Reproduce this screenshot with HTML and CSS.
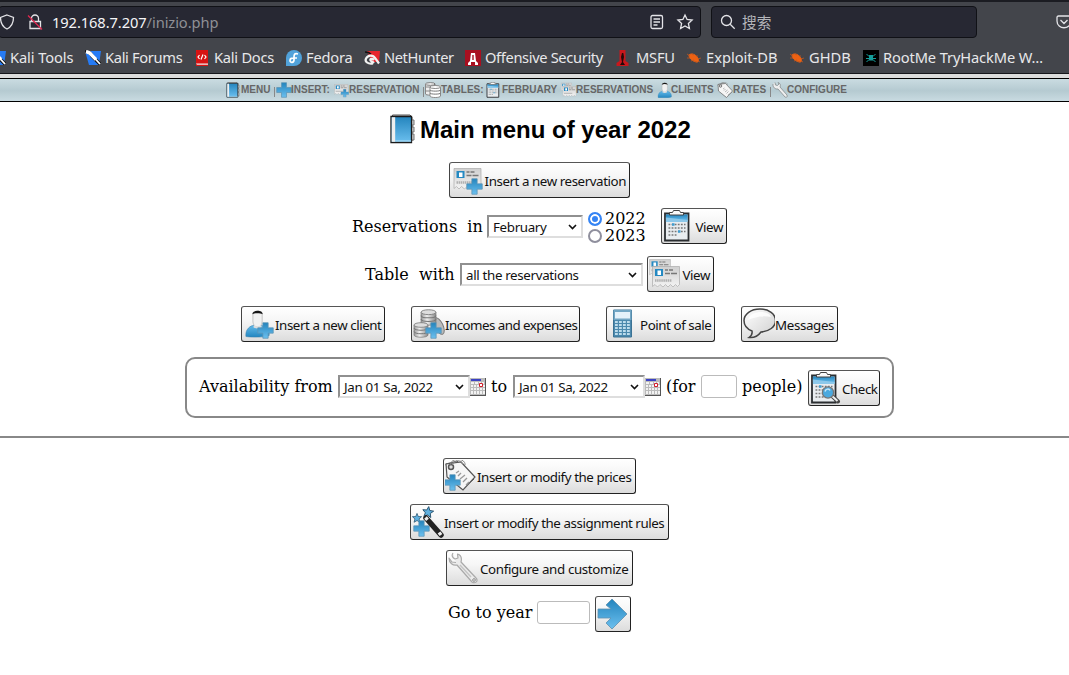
FILE: index.html
```html
<!DOCTYPE html>
<html lang="en">
<head>
<meta charset="utf-8">
<title>Main menu</title>
<link rel="stylesheet" href="styles.css">
</head>
<body>
<svg class="defs" aria-hidden="true">
  <defs>
    <linearGradient id="blue" x1="0" y1="0" x2="0" y2="1"><stop offset="0" stop-color="#2384bd"/><stop offset="1" stop-color="#6cc0ef"/></linearGradient>
    <linearGradient id="bluerev" x1="0" y1="0" x2="0" y2="1"><stop offset="0" stop-color="#65bae9"/><stop offset="1" stop-color="#2286c0"/></linearGradient>
    <linearGradient id="grey" x1="0" y1="0" x2="1" y2="1"><stop offset="0" stop-color="#fff"/><stop offset="1" stop-color="#cfcfcf"/></linearGradient>
    <linearGradient id="paper" x1="0" y1="0" x2="0" y2="1"><stop offset="0" stop-color="#cfcfcf"/><stop offset="1" stop-color="#f4f4f4"/></linearGradient>
    <linearGradient id="metal"><stop offset="0" stop-color="#999"/><stop offset=".4" stop-color="#eee"/><stop offset="1" stop-color="#888"/></linearGradient>
  </defs>
  <symbol id="plus" viewBox="0 0 16 16"><path d="M5.500.700h5v4.800h4.800v5h-4.800v4.800h-5v-4.800H.7v-5h4.800z" fill="url(#blue)" stroke="#5c93b3" stroke-width=".7"/></symbol>
  <symbol id="book" viewBox="0 0 25 30"><path d="M2.500 1h17.500l2 2v24H2z" fill="#c8c8c8" stroke="#555"/><path d="M22 6h2v5h-2m0 2h2v5h-2m0 2h2v6h-2" fill="#ccc" stroke="#777"/><path d="M1 2.500h20.500v26H1z" fill="url(#blue)" stroke="#1b1b1b" stroke-width="1.300"/><path d="M1.700 3.200h3.500v24.600H1.700z" fill="#eee"/><path d="M5.200 27h16" stroke="#b8e2f8"/></symbol>
  <symbol id="ticket" viewBox="0 0 28 22"><path d="M.5.500h27v18l-2 2-2-2-2.500 2.500-2.500-2.500-2.500 2.500-2.500-2.500-2.500 2.500L8 18.500 5.500 21 3 18.500l-2.500 2z" fill="url(#paper)" stroke="#aaa" stroke-width=".7"/><path d="M3 3h8v7H3z" fill="#2489c2"/><path d="M5.500 4.500h3.500v4.500H5.500z" fill="#fff"/><path d="M13 4h3m1 0h4M13 7.500h5m1 0h6" stroke="#777" stroke-width="1.300"/><path d="M3 14.500h17" stroke="#b0b0b0" stroke-width="2.500" stroke-dasharray="1.500 .6"/></symbol>
  <symbol id="newres" viewBox="0 0 32 32"><use href="#ticket" x="2" y="4" width="29" height="22"/><use href="#plus" x="15" y="14" width="17" height="17"/></symbol>
  <symbol id="tickets" viewBox="0 0 32 32"><use href="#ticket" x="0" y="1" width="22" height="17"/><use href="#ticket" x="3" y="8" width="28" height="22"/></symbol>
  <symbol id="clip" viewBox="0 0 32 32"><path d="M2 3.500h23.500v27H2z" fill="#e9edf0" stroke="#2b2e31" stroke-width="1.800"/><path d="M2.900 4.500h21.700V11L2.900 8.500z" fill="url(#blue)"/><path d="M2.900 7.500 24.600 10v2H2.900z" fill="#8cc8ea"/><path d="M6.500 5V2.500h3l1-2h6l1 2h3V5z" fill="#fafafa" stroke="#444"/><path d="M5.500 14.500h17M5.500 18h17M5.500 21.500h17M5.500 25h8" stroke="#777" stroke-width="1.300" stroke-dasharray="1.800 1.300"/><path d="M9 14.500h2.500M15 21.500h2.500" stroke="#3f9dd0" stroke-width="2.300"/></symbol>
  <symbol id="check" viewBox="0 0 32 32"><use href="#clip" width="32" height="32"/><path d="m21 23 7 6.500" stroke="#444" stroke-width="4" stroke-linecap="round"/><path d="m22 24 5.500 5" stroke="#eee" stroke-width="2"/><circle cx="18" cy="20.500" r="5.600" fill="#4aa9df" stroke="#777" stroke-width="1.300"/><path d="M15 19.500c1-3 4-3 5-1" fill="none" stroke="#c8e8fa" stroke-width="1.500"/></symbol>
  <symbol id="person" viewBox="0 0 28 30"><path d="M1 29C0 21 6 17 10 17h6c5 0 11 4 10 11-5 2-20 2-25 1z" fill="url(#bluerev)" stroke="#3c83ad" stroke-width=".6"/><path d="M8.500 4c0-3 10-3 10 0v8c0 4-2 7-5 7s-5-3-5-7z" fill="#f1f1f1" stroke="#aaa" stroke-width=".7"/><path d="M8 5c0-5 11-5 11 0-3-1.500-8-1.500-11 0z" fill="#151515"/><path d="M10 16c2 3 5 3 7 0l1 3c-3 2-6 2-9 0z" fill="#ddd"/></symbol>
  <symbol id="newclient" viewBox="0 0 32 32"><use href="#person" x="2" y="1" width="26" height="29"/><use href="#plus" x="14" y="14" width="17" height="17"/></symbol>
  <symbol id="stack" viewBox="0 0 16 16"><path d="M1 3v10c0 3 14 3 14 0V3" fill="url(#metal)" stroke="#777" stroke-width=".7"/><path d="M1 6c0 3 14 3 14 0M1 9.500c0 3 14 3 14 0" fill="none" stroke="#777"/><ellipse cx="8" cy="3" rx="7" ry="2.300" fill="#ddd" stroke="#777" stroke-width=".8"/></symbol>
  <symbol id="coins" viewBox="0 0 32 32"><ellipse cx="26" cy="18" rx="4" ry="9" transform="rotate(-25 26 18)" fill="#bbb" stroke="#777"/><use href="#stack" x="7" y="1" width="17" height="17"/><use href="#stack" x="0" y="14" width="16" height="16"/><use href="#plus" x="12" y="14" width="17" height="17"/></symbol>
  <symbol id="db" viewBox="0 0 16 16"><path d="M.5 2v10c0 1.500 9.500 1.500 9.500 0V2" fill="#eee" stroke="#888"/><ellipse cx="5.300" cy="2" rx="4.800" ry="1.300" fill="#fff" stroke="#777"/><path d="M.5 5H10M.5 9H10" stroke="#888"/><path d="M5 5v9c0 2 10.500 2 10.500 0V5" fill="#fff" stroke="#888"/><path d="M5 8c0 1.500 10.500 1.500 10.500 0M5 11c0 1.500 10.500 1.500 10.500 0" fill="none" stroke="#777"/><ellipse cx="10.200" cy="5" rx="5.200" ry="1.500" fill="#fff" stroke="#888"/></symbol>
  <symbol id="calc" viewBox="0 0 32 32"><path d="M5.500 2h18v27h-18z" fill="#4c89ad" stroke="#3b7294"/><path d="M5.500 2h18v10h-18z" fill="#72a6c4"/><path d="M7 4h15v6.500H7z" fill="#e4f1fa"/><path d="M7 14h15M7 17h15M7 20h15M7 23h15M7 26h15" stroke="#bddcec" stroke-width="1.900" stroke-dasharray="2.800 1.200"/></symbol>
  <symbol id="bubble" viewBox="0 0 32 32"><path d="M17 1c9 0 15.500 5 15.500 11.500S26 23.500 18 24C15 28 10 30 6 29.500c3-2 3.500-4 3-6.500C4 21 1 17 1 12.500 1 6 8 1 17 1z" fill="url(#grey)" stroke="#444" stroke-width="1.500"/><path d="M5 12c1-6 8-8 13-8s9 2 10 5c-8-2-16 0-23 3z" fill="#fff" opacity=".8"/></symbol>
  <symbol id="tag" viewBox="0 0 32 32"><path d="M2 5 13 2l17 18-12 10L5 18z" fill="#eee" stroke="#555"/><path d="M2 5 17 3l14 15-12 13L3 18z" fill="#f6f6f6" stroke="#555" stroke-width="1.200"/><circle cx="7" cy="8" r="2.500" fill="#ddd" stroke="#555" stroke-width="1.500"/><path d="M6 6C7-2 22-1 21 6M8 6c3-6 9-5 11-1" fill="none" stroke="#888"/><path d="m12 14 3-2m-1 5 3-3m-1 6 5-4m-2 7 4-4m-1 7 3-3" stroke="#999" stroke-width="1.300"/></symbol>
  <symbol id="newtag" viewBox="0 0 32 32"><use href="#tag" x="-1" y="-1" width="32" height="32"/><use href="#plus" x="-1" y="14" width="17" height="17"/></symbol>
  <symbol id="star" viewBox="0 0 12 12"><path d="m6 .5 1.500 3.700 4 .2-3 2.700 1 4L6 9l-3.500 2.100 1-4-3-2.700 4-.2z" fill="#5fb0df" stroke="#28526d" stroke-width=".9"/></symbol>
  <symbol id="wand" viewBox="0 0 32 32"><use href="#star" x="10" y="0" width="12" height="12" transform="rotate(8 16 6)"/><use href="#star" x="0" y="7" width="10" height="10"/><use href="#plus" x="1" y="14" width="17" height="17"/><path d="m14 12 15 17" stroke="#222" stroke-width="5.500" stroke-linecap="round"/><path d="m13.500 11.500 2 2.300M27 26.500l2 2.500" stroke="#eee" stroke-width="3.500"/></symbol>
  <symbol id="wrench" viewBox="0 0 32 32"><path d="M5 1c-2 3 0 5 2 6l3-1-.5-4C13 3 14 6 13 10l15 16c3 3-1 6-4 4L9 13C5 14 1 11 1 6l3 4 4 .5" fill="#ebebeb" stroke="#aaa" stroke-width="1.200" stroke-linejoin="round"/><path d="m12 13 11 12" stroke="#c5c5c5" stroke-width="1.500"/><circle cx="26" cy="28" r="1.300" fill="#fff" stroke="#888"/></symbol>
  <symbol id="wrench-small" viewBox="0 0 16 16"><path d="M3 .5 3.500 3l2 .5L7 2l-1-1.500C8 1 9 3 8 5l7 8c1 2-1 3-2 2L6 7C3 7.500.5 5 1 2" fill="#eee" stroke="#8d9496" stroke-width=".9" stroke-linejoin="round"/></symbol>
  <symbol id="arrow" viewBox="0 0 32 32"><path d="m15 1 15 15-15 15-6-6 5-5H1v-9h13L9 7z" fill="url(#blue)" stroke="#5e91b0" stroke-width=".8"/></symbol>
  <symbol id="cal" viewBox="0 0 16 18"><path d="M0 0h16v18H0z" fill="#555"/><path d="M0 0h15v17H0z" fill="#bbb"/><path d="M1 4h3v2H1zm4 0h3v2H5zm4 0h2v2H9zm3 0h2v2h-2zM1 7h2v2H1zm3 0h2v2H4zm3 0h2v2H7zm6 0h2v2h-2zM1 10h2v2H1zm3 0h2v2H4zm3 0h2v2H7zm3 0h2v2h-2zm3 0h2v2h-2zM1 13h2v3H1zm3 0h2v3H4zm3 0h2v3H7zm3 0h2v3h-2zm3 0h2v3h-2z" fill="#f2f2f2"/><path d="M1 1h10v2H1z" fill="#3b42c4"/><path d="M9.500 5.500h3v3h-3z" fill="#fff" stroke="#d3202d"/></symbol>
  <symbol id="chev" viewBox="0 0 9 6"><path d="m1 1 3.500 3.500L8 1" fill="none" stroke="#111" stroke-width="1.600"/></symbol>
  <symbol id="bug" viewBox="0 0 16 16"><path d="M3 5c2-2 6-1 8 2 2 2 2 5 0 5-3 0-8-3-8-7z" fill="#ee6112" stroke="#ee6112"/><path d="m1 4 3 2M1 8h3m1 3 3-1m-2-6 2 1m3 0v2m1 2 3-1m-3 3 2 1m-6-1 3 1" stroke="#c2571f" stroke-width=".8"/></symbol>
  <symbol id="kali" viewBox="0 0 16 16"><path d="M0 1h16l-2 14H4z" fill="#267bf5"/><path d="M0 1c4 1 6 2 7 5l8 8" fill="none" stroke="#111" stroke-width="3.600"/><path d="M1 1.500c4 1 5 2 6 4l4 4" fill="none" stroke="#fff" stroke-width="3.400"/><path d="m10 8.500 5 5.500" stroke="#fff" stroke-width="1.800"/></symbol>
</svg>

<header class="browser">
  <div class="toolbar">
    <div class="urlbar">
      <svg class="shield" viewBox="0 0 16 16"><path d="m8 1 6.500 2.500c0 6-2.500 9.500-6.500 11.500-4-2-6.500-5.500-6.500-11.500z"/></svg>
      <svg class="lock" viewBox="0 0 16 16"><path d="M4.500 7V4.500a3.500 3.500 0 0 1 7 0V7M3 7.500h10.500v7H3z"/><path class="slash" d="m1 1.500 14 14"/></svg>
      <span class="address"><b>192.168.7.207</b>/inizio.php</span>
      <svg class="reader" viewBox="0 0 16 16"><rect x="2" y="1.500" width="11.500" height="13" rx="1.500"/><path d="M4.500 5h6.500M4.500 8h6.500M4.500 11h4"/></svg>
      <svg class="fav" viewBox="0 0 16 16"><path d="m8 1 2.100 4.500 5 .6-3.700 3.400 1 5L8 12l-4.400 2.500 1-5L.9 6.100l5-.6z"/></svg>
    </div>
    <div class="search">
      <svg viewBox="0 0 16 16"><circle cx="6.500" cy="6.500" r="5"/><path d="m10.200 10.200 4.500 4.500"/></svg>
      <span>搜索</span>
    </div>
    <svg class="pocket" viewBox="0 0 16 16"><path d="M2.500 2h11q1.500 0 1.500 1.500V7c0 9-14 9-14 0V3.500Q1 2 2.500 2zM4.500 6 8 9.500 11.500 6"/></svg>
  </div>
  <nav class="bookmarks">
    <a class="bm b-tools"><svg><use href="#kali"/></svg><span>Kali Tools</span></a>
    <a class="bm b-forums"><svg><use href="#kali"/></svg><span>Kali Forums</span></a>
    <a class="bm b-docs"><svg viewBox="0 0 16 16"><path d="M2 0h12v16H2z" fill="#d81313"/><path d="M2 13.500h12v1.200H3z" fill="#eee"/><path d="M5.500 5 4 7l1.500 2M10.500 5 12 7l-1.500 2M9 4.500l-2 5" fill="none" stroke="#fff" stroke-width="1.200"/></svg><span>Kali Docs</span></a>
    <a class="bm b-fedora"><svg viewBox="0 0 16 16"><path d="M8 0a8 8 0 0 1 0 16H0V8a8 8 0 0 1 8-8z" fill="#51a2da"/><path d="M12 4c-3-1-4 0-4 3v3c0 3-4 3-4 .5S6 8 8 8h3" fill="none" stroke="#fff" stroke-width="1.700"/></svg><span>Fedora</span></a>
    <a class="bm b-net"><svg viewBox="0 0 16 16"><path d="M3 1h13l-1 11H8z" fill="#e8252e"/><path d="M1 2c3 0 5 1 6 2" stroke="#111" stroke-width="1.500"/><path d="M9 13.500c-5 1-8.500-2-7-5 2-3.500 7-4 9-.5l4 5.500M10 10C8 8 5.500 9 6.500 10.500S9 12 10 13" fill="none" stroke="#f2f2f2" stroke-width="2.200"/></svg><span>NetHunter</span></a>
    <a class="bm b-off"><svg viewBox="0 0 16 16"><path d="M0 0h16v16H0z" fill="#a90f20"/><path d="M6 3h4l1 8 2 2v2h-3v-3H6v3H3v-2l2-2z" fill="#fff"/><path d="M7.300 5h1.400v5H7.300z" fill="#a90f20"/></svg><span>Offensive Security</span></a>
    <a class="bm b-msfu"><svg viewBox="0 0 16 16"><path d="M3.500 0h6v11l3 2v3H.5v-3l3-2z" fill="#c9171c"/><path d="M6 3h1.300l.7 4-1 5 2 3H4l2-3-1-5z" fill="#250909"/></svg><span>MSFU</span></a>
    <a class="bm b-exp"><svg><use href="#bug"/></svg><span>Exploit-DB</span></a>
    <a class="bm b-ghdb"><svg><use href="#bug"/></svg><span>GHDB</span></a>
    <a class="bm b-root"><svg viewBox="0 0 16 16"><path d="M0 0h16v16H0z" fill="#000"/><path d="m3.500 4 2 2h5l2-2M3 8.500h10M3.500 12l2-2h5l2 2" fill="none" stroke="#159e9b"/><path d="M6 5h4v5H6z" fill="#159e9b"/></svg><span>RootMe TryHackMe W…</span></a>
  </nav>
</header>

<nav class="menu">
  <a class="m1"><svg><use href="#book"/></svg>MENU</a><i></i>
  <a class="m2"><svg><use href="#plus"/></svg>INSERT:</a>
  <a class="m3"><svg><use href="#newres"/></svg>RESERVATION</a><i></i>
  <a class="m4"><svg><use href="#db"/></svg>TABLES:</a>
  <a class="m5"><svg><use href="#clip"/></svg>FEBRUARY</a>
  <a class="m6"><svg><use href="#tickets"/></svg>RESERVATIONS</a>
  <a class="m7"><svg><use href="#person"/></svg>CLIENTS</a>
  <a class="m8"><svg><use href="#tag"/></svg>RATES</a><i></i>
  <a class="m9"><svg><use href="#wrench-small"/></svg>CONFIGURE</a>
</nav>

<main>
  <h1><svg><use href="#book"/></svg><span>Main menu of year 2022</span></h1>
  <div class="row r-new"><button class="btn w-newres"><svg><use href="#newres"/></svg><span>Insert a new reservation</span></button></div>
  <div class="row r-month">
    <span class="txt t-res">Reservations&nbsp; in</span>
    <span class="sel s-month"><span>February</span><svg><use href="#chev"/></svg></span>
    <span class="years"><label><input type="radio" name="y" checked>2022</label><label><input type="radio" name="y">2023</label></span>
    <button class="btn w-view1"><svg><use href="#clip"/></svg><span>View</span></button>
  </div>
  <div class="row r-table">
    <span class="txt t-table">Table&nbsp; with</span>
    <span class="sel s-all"><span>all the reservations</span><svg><use href="#chev"/></svg></span>
    <button class="btn w-view2"><svg><use href="#tickets"/></svg><span>View</span></button>
  </div>
  <div class="row r-actions">
    <button class="btn w-client"><svg><use href="#newclient"/></svg><span>Insert a new client</span></button>
    <button class="btn w-income"><svg><use href="#coins"/></svg><span>Incomes and expenses</span></button>
    <button class="btn w-pos"><svg><use href="#calc"/></svg><span>Point of sale</span></button>
    <button class="btn w-msg"><svg><use href="#bubble"/></svg><span>Messages</span></button>
  </div>
  <div class="avail">
    <span class="txt t-from">Availability from</span>
    <span class="sel s-date"><span>Jan 01 Sa, 2022</span><svg><use href="#chev"/></svg></span><svg class="cal"><use href="#cal"/></svg>
    <span class="txt t-to">to</span>
    <span class="sel s-date"><span>Jan 01 Sa, 2022</span><svg><use href="#chev"/></svg></span><svg class="cal"><use href="#cal"/></svg>
    <span class="txt t-for">(for</span><input class="field f-people" type="text"><span class="txt t-people">people)</span>
    <button class="btn w-check"><svg><use href="#check"/></svg><span>Check</span></button>
  </div>
  <hr>
  <div class="row r-prices"><button class="btn w-prices"><svg><use href="#newtag"/></svg><span>Insert or modify the prices</span></button></div>
  <div class="row r-rules"><button class="btn w-rules"><svg><use href="#wand"/></svg><span>Insert or modify the assignment rules</span></button></div>
  <div class="row r-conf"><button class="btn w-conf"><svg><use href="#wrench"/></svg><span>Configure and customize</span></button></div>
  <div class="row r-year"><span class="txt t-year">Go to year</span><input class="field f-year" type="text"><button class="btn w-go"><svg><use href="#arrow"/></svg></button></div>
</main>
</body>
</html>
```

FILE: styles.css
```css
* { box-sizing: border-box; }
body { margin: 0; height: 675px; overflow: hidden; background: #fff; font-family: "DejaVu Serif", serif; font-size: 16px; color: #000; }
svg { display: block; flex: none; overflow: visible; }
.defs { position: absolute; width: 0; height: 0; }

/* browser chrome */
.browser { height: 74px; background: #43454b; border-top: 2px solid #1b1c22; border-bottom: 1px solid #16171b; color: #e8e8ea; font-family: "Noto Sans", "Noto Sans CJK SC", sans-serif; font-size: 14.67px; }
.toolbar { display: flex; height: 40px; padding-top: 4px; }
.urlbar, .search { display: flex; flex: none; align-items: center; height: 32px; background: #272833; border: 1px solid #101116; border-radius: 4px; }
.urlbar { width: 703px; margin-left: -2px; }
.browser .toolbar svg { width: 16px; height: 16px; fill: none; stroke: #e4e4e8; stroke-width: 1.3; }
.toolbar .lock { margin-left: 12px; }
.toolbar .lock .slash { stroke: #e22850; }
.address { width: 597px; padding-bottom: 1px; margin-left: 9px; color: #8f9096; white-space: nowrap; letter-spacing: -.08px; }
.address b { font-weight: 400; color: #f5f5f7; }
.toolbar .fav { margin-left: 12px; }
.search { width: 266px; margin-left: 10px; padding-left: 8px; gap: 6px; color: #b4b5ba; }
.search span { padding-bottom: 1px; }
.toolbar .pocket { margin: 8px 0 0 79px; }
.bookmarks { display: flex; height: 31px; margin-left: -10px; align-items: center; }
.bm { display: flex; flex: none; align-items: center; gap: 4px; white-space: nowrap; }
.bm svg { width: 16px; height: 16px; }
.bm span { padding-bottom: 2px; }
.b-tools { width: 95px; letter-spacing: -.1px; }
.b-forums { width: 109px; letter-spacing: -.33px; }
.b-docs { width: 92px; letter-spacing: -.25px; }
.b-fedora { width: 78px; letter-spacing: -.2px; }
.b-net { width: 101px; letter-spacing: -.4px; }
.b-off { width: 151px; letter-spacing: -.35px; }
.b-msfu { width: 70px; letter-spacing: -.2px; }
.b-exp { width: 103px; }
.b-ghdb { width: 74px; }
.b-root { letter-spacing: -.12px; }

/* page menu */
.menu { display: flex; height: 28px; padding-left: 225px; background: linear-gradient(#ccdde3, #b5cad1 55%, #c9dbe1); border-top: 4px solid #dcdcdc; border-bottom: 1px solid #000; box-shadow: inset 0 1px #000; font: bold 10px/23px "Liberation Sans", Arial, sans-serif; color: #666; }
.menu a { display: flex; flex: none; align-items: center; white-space: nowrap; }
.menu svg { width: 16px; height: 16px; }
.menu i { width: 1px; height: 10px; margin: 9px 1px 0; background: #888; }
.m1 { width: 48px; } .m2 { width: 57px; } .m3 { width: 89px; } .m4 { width: 61px; } .m5 { width: 75px; }
.m6 { width: 96px; } .m7 { width: 60px; } .m8 { width: 52px; }
.menu .m2 svg, .menu .m6 svg, .menu .m9 svg { margin-right: -1px; }
.menu .m7 svg { margin-right: -2px; }

/* content */
h1 { display: flex; height: 30px; margin: 12px 0 0 390px; gap: 5px; font: bold 24px/32px "Liberation Sans", Arial, sans-serif; }
h1 svg { width: 25px; height: 30px; }
.row { display: flex; height: 36px; }
.row, .avail { white-space: nowrap; }
.txt { flex: none; }
.row .txt { line-height: 38px; }
.btn { display: flex; flex: none; align-items: center; justify-content: space-between; height: 36px; padding: 0 3px 0 1px; border: 1px solid; border-color: #555 #222 #222 #444; border-radius: 3px; background: linear-gradient(#fff, #f6f6f6 40%, #dcdcdc); font: 13.33px "Noto Sans", sans-serif; letter-spacing: -.43px; color: #111; white-space: nowrap; }
.btn svg { width: 32px; height: 32px; }
.btn span { padding-top: 2px; }
.sel { display: flex; flex: none; align-items: center; justify-content: space-between; height: 23px; padding: 0 4px; border: 2px solid; border-color: #909090 #dedede #dedede #909090; background: #fff; font: 13.33px "Noto Sans", sans-serif; letter-spacing: -.33px; color: #111; }
.sel svg { width: 9px; height: 6px; }
.field { flex: none; height: 23px; padding: 0 4px; border: 1px solid #bbb; border-radius: 3px; background: #fff; }
.r-new { margin: 18px 0 0 449px; } .w-newres { width: 181px; }
.r-month { margin: 10px 0 0 352px; }
.t-res { width: 135px; } .s-month { width: 96px; } .r-month .sel, .r-table .sel { margin-top: 7px; }
.years { display: flex; flex-direction: column; width: 78px; padding: 2px 0 0 5px; line-height: 17px; }
.years label { display: flex; align-items: center; gap: 3px; height: 17px; }
.years input { appearance: none; flex: none; width: 14px; height: 14px; margin: 0; border: 2px solid #8f8f9d; border-radius: 50%; background: #fff; }
.years input:checked { border-color: #3584f4; background: #3584f4; box-shadow: inset 0 0 0 2px #fff; }
.w-view1 { width: 66px; }
.r-table { margin: 12px 0 0 365px; }
.t-table { width: 95px; } .s-all { width: 183px; margin-right: 4px; } .w-view2 { width: 67px; }
.r-actions { margin: 14px 0 0 241px; }
.w-client { width: 144px; margin-right: 26px; } .w-income { width: 169px; margin-right: 26px; letter-spacing: -.53px; }
.w-pos { width: 109px; margin-right: 26px; } .w-msg { width: 97px; letter-spacing: -.35px; }
.avail { display: flex; width: 709px; height: 61px; margin: 15px 0 0 185px; padding: 11px 0 0 12px; border: 2px solid #888; border-radius: 10px; }
.avail .txt { line-height: 34px; }
.avail .sel, .avail .field { margin-top: 5px; }
.t-from { width: 139px; } .s-date { width: 132px; }
.cal { width: 16px; height: 18px; margin-top: 8px; }
.t-to { width: 27px; padding-left: 5px; }
.t-for { width: 40px; padding-left: 5px; } .f-people { width: 36px; }
.t-people { width: 71px; padding-left: 5px; } .w-check { width: 72px; }
hr { height: 2px; margin: 18px 0 0; border: 0; background: #888; }
.r-prices { margin: 20px 0 0 443px; } .w-prices { width: 193px; padding-right: 5px; }
.r-rules { margin: 10px 0 0 410px; } .w-rules { width: 259px; padding-right: 4px; }
.r-conf { margin: 10px 0 0 446px; } .w-conf { width: 187px; padding-right: 5px; letter-spacing: -.35px; }
.r-year { margin: 10px 0 0 448px; }
.r-year .txt { width: 89px; line-height: 34px; }
.f-year { width: 53px; margin: 5px 5px 0 0; } .w-go { width: 36px; }
```
